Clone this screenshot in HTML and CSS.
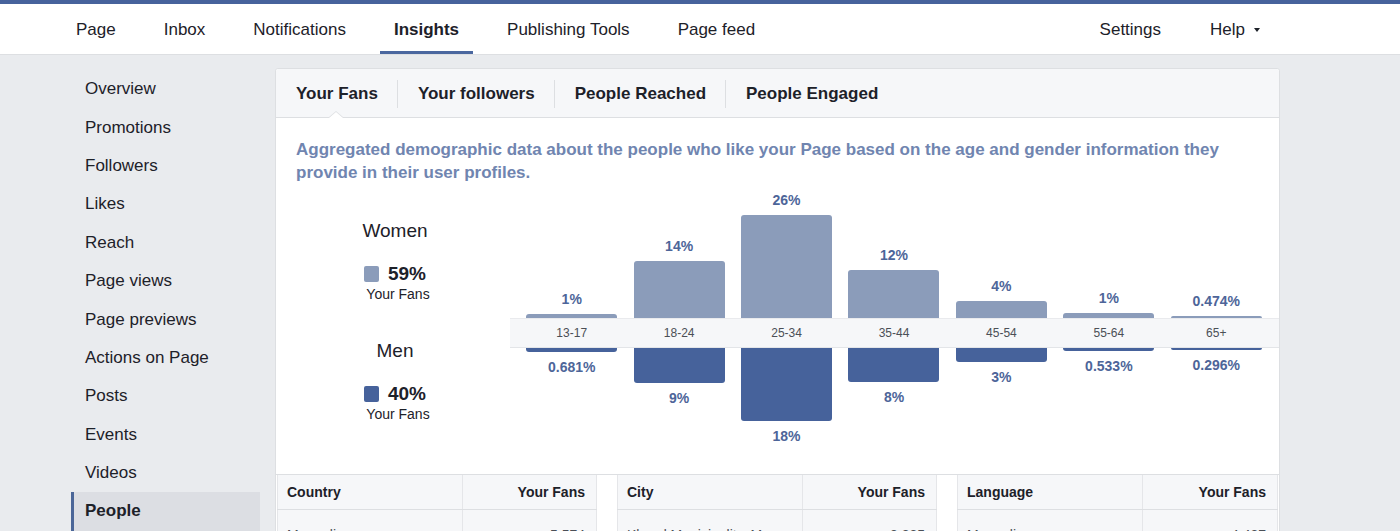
FILE: index.html
```html
<!DOCTYPE html>
<html lang="en">
<head>
<meta charset="utf-8">
<title>Insights - People</title>
<link rel="stylesheet" href="styles.css">
</head>
<body>
<div class="topbar"></div>
<nav class="nav">
  <div class="nav-left">
    <a class="nav-item">Page</a>
    <a class="nav-item">Inbox</a>
    <a class="nav-item">Notifications</a>
    <a class="nav-item active">Insights</a>
    <a class="nav-item">Publishing Tools</a>
    <a class="nav-item">Page feed</a>
  </div>
  <div class="nav-right">
    <a class="nav-item">Settings</a>
    <a class="nav-item">Help <svg class="caret-down" width="6" height="4" viewBox="0 0 6 4"><path d="M0 0h6L3 4z" fill="#1d2129"/></svg></a>
  </div>
</nav>
<div class="layout">
  <aside class="sidebar">
    <a class="side-item">Overview</a>
    <a class="side-item">Promotions</a>
    <a class="side-item">Followers</a>
    <a class="side-item">Likes</a>
    <a class="side-item">Reach</a>
    <a class="side-item">Page views</a>
    <a class="side-item">Page previews</a>
    <a class="side-item">Actions on Page</a>
    <a class="side-item">Posts</a>
    <a class="side-item">Events</a>
    <a class="side-item">Videos</a>
    <a class="side-item active">People</a>
  </aside>
  <main class="card">
    <div class="tabs">
      <div class="tab active">Your Fans</div>
      <div class="tab">Your followers</div>
      <div class="tab">People Reached</div>
      <div class="tab">People Engaged</div>
    </div>
    <p class="desc">Aggregated demographic data about the people who like your Page based on the age and gender information they provide in their user profiles.</p>
    <div class="chart">
      <div class="legend">
        <div class="lg-title">Women</div>
        <div class="lg-val"><span class="sq sq-women"></span>59%</div>
        <div class="lg-sub">Your Fans</div>
        <div class="lg-title men">Men</div>
        <div class="lg-val"><span class="sq sq-men"></span>40%</div>
        <div class="lg-sub">Your Fans</div>
      </div>
      <div class="bars">
        <div class="upper">
          <div class="col"><span class="val">1%</span><div class="bar bar-w" style="height:4px"></div></div>
          <div class="col"><span class="val">14%</span><div class="bar bar-w" style="height:57px"></div></div>
          <div class="col"><span class="val">26%</span><div class="bar bar-w" style="height:103px"></div></div>
          <div class="col"><span class="val">12%</span><div class="bar bar-w" style="height:48px"></div></div>
          <div class="col"><span class="val">4%</span><div class="bar bar-w" style="height:17px"></div></div>
          <div class="col"><span class="val">1%</span><div class="bar bar-w" style="height:5px"></div></div>
          <div class="col"><span class="val">0.474%</span><div class="bar bar-w" style="height:2px"></div></div>
        </div>
        <div class="band">
          <span class="age">13-17</span>
          <span class="age">18-24</span>
          <span class="age">25-34</span>
          <span class="age">35-44</span>
          <span class="age">45-54</span>
          <span class="age">55-64</span>
          <span class="age">65+</span>
        </div>
        <div class="lower">
          <div class="col"><div class="bar bar-m" style="height:4px"></div><span class="val">0.681%</span></div>
          <div class="col"><div class="bar bar-m" style="height:35px"></div><span class="val">9%</span></div>
          <div class="col"><div class="bar bar-m" style="height:73px"></div><span class="val">18%</span></div>
          <div class="col"><div class="bar bar-m" style="height:34px"></div><span class="val">8%</span></div>
          <div class="col"><div class="bar bar-m" style="height:14px"></div><span class="val">3%</span></div>
          <div class="col"><div class="bar bar-m" style="height:3px"></div><span class="val">0.533%</span></div>
          <div class="col"><div class="bar bar-m" style="height:2px"></div><span class="val">0.296%</span></div>
        </div>
      </div>
    </div>
    <div class="tables">
      <table class="tbl">
        <thead><tr><th class="c1">Country</th><th class="c2">Your Fans</th></tr></thead>
        <tbody><tr><td class="c1">Mongolia</td><td class="c2">5,574</td></tr></tbody>
      </table>
      <table class="tbl">
        <thead><tr><th class="c1">City</th><th class="c2">Your Fans</th></tr></thead>
        <tbody><tr><td class="c1">Khovd Municipality, M</td><td class="c2">3,885</td></tr></tbody>
      </table>
      <table class="tbl">
        <thead><tr><th class="c1">Language</th><th class="c2">Your Fans</th></tr></thead>
        <tbody><tr><td class="c1">Mongolian</td><td class="c2">4,487</td></tr></tbody>
      </table>
    </div>
  </main>
</div>
</body>
</html>
```

FILE: styles.css
```css
* { box-sizing: border-box; }
html, body { margin: 0; padding: 0; }
body {
  background: #e9ebee;
  font-family: "Liberation Sans", Arial, Helvetica, sans-serif;
  color: #1d2129;
  overflow: hidden;
  height: 531px;
}
a { color: inherit; text-decoration: none; }

.topbar { height: 4px; background: #47639c; }

.nav {
  height: 51px;
  background: #fff;
  border-bottom: 1px solid #dddfe2;
  display: flex;
  justify-content: space-between;
  padding: 0 126px 0 62px;
}
.nav-left, .nav-right { display: flex; gap: 20px; }
.nav-right { gap: 21px; }
.nav-item {
  display: flex;
  align-items: center;
  padding: 5px 14px 0 14px;
  font-size: 17px;
  color: #1d2129;
  height: 50px;
  border-bottom: 3px solid transparent;
}
.nav-item.active { font-weight: bold; border-bottom-color: #4a679f; }
.caret-down { margin-left: 9px; }

.layout { display: flex; padding-left: 71px; }
.sidebar { width: 189px; padding-top: 15px; flex: none; }
.side-item {
  display: flex;
  align-items: center;
  height: 38.4px;
  padding-left: 14px;
  font-size: 17px;
  color: #1d2129;
}
.side-item.active {
  background: #dcdee3;
  border-left: 3px solid #4b6698;
  padding-left: 11px;
  font-weight: bold;
}

.card {
  margin-left: 15px;
  margin-top: 13px;
  width: 1005px;
  background: #fff;
  border: 1px solid #dddfe2;
  border-radius: 3px 3px 0 0;
  height: 600px;
}
.tabs {
  height: 49px;
  background: #f6f7f9;
  border-bottom: 1px solid #dddfe2;
  display: flex;
  align-items: stretch;
  border-radius: 3px 3px 0 0;
}
.tab {
  position: relative;
  display: flex;
  align-items: center;
  padding: 2px 19px 0 20px;
  font-size: 17px;
  font-weight: bold;
  color: #1d2129;
}
.tab + .tab { padding-left: 21px; }
.tab + .tab::before {
  content: "";
  position: absolute;
  left: 0;
  top: 11px;
  bottom: 9px;
  border-left: 1px solid #dddfe2;
}
.tab.active::after {
  content: "";
  position: absolute;
  left: 50%;
  bottom: -1px;
  margin-left: -7px;
  width: 0;
  height: 0;
  border-left: 7px solid transparent;
  border-right: 7px solid transparent;
  border-bottom: 6px solid #fff;
  filter: drop-shadow(0 -1px 0 #dddfe2);
}

.desc {
  margin: 0;
  padding: 20px 20px 0 20px;
  font-size: 17px;
  line-height: 23px;
  font-weight: bold;
  color: #7085b0;
}

.chart { display: flex; padding-left: 20px; }
.legend {
  width: 198px;
  flex: none;
  display: flex;
  flex-direction: column;
  align-items: center;
  padding-top: 36px;
}
.lg-title { font-size: 19px; line-height: 22px; color: #1d2129; }
.lg-title.men { margin-top: 38px; }
.lg-val {
  display: flex;
  align-items: center;
  margin-top: 21px;
  font-size: 19px;
  line-height: 22px;
  font-weight: bold;
  color: #1d2129;
}
.sq { width: 15px; height: 16px; border-radius: 2px; margin-right: 9px; }
.sq-women { background: #8b9cba; }
.sq-men { background: #46629b; }
.lg-sub { font-size: 14px; line-height: 16px; margin-top: 1px; color: #1d2129; padding-left: 6px; }

.bars { margin-left: 16px; flex: 1; }
.upper, .lower, .band {
  display: grid;
  grid-template-columns: repeat(7, 1fr);
  padding: 0 9px 0 8px;
}
.upper { height: 134px; }
.lower { height: 126px; }
.col {
  display: flex;
  flex-direction: column;
  align-items: center;
}
.upper .col { justify-content: flex-end; }
.upper .val { margin-bottom: 7px; }
.lower .val { margin-top: 7px; }
.val {
  font-size: 14px;
  line-height: 16px;
  font-weight: bold;
  color: #4d6599;
}
.bar { width: 91px; }
.bar-w { background: #8b9cba; border-radius: 3px 3px 0 0; }
.bar-m { background: #46629b; border-radius: 0 0 3px 3px; }
.band {
  height: 30px;
  background: #f6f7f9;
  border-top: 1px solid #e9eaed;
  border-bottom: 1px solid #e3e5e8;
  align-items: center;
}
.age {
  text-align: center;
  font-size: 12px;
  color: #4b4f56;
}

.tables {
  display: grid;
  grid-template-columns: 320px 320px 321px;
  column-gap: 20px;
  padding: 0 1px;
  border-top: 1px solid #dddfe2;
}
.tbl {
  border-collapse: collapse;
  table-layout: fixed;
  width: 100%;
  font-size: 14px;
  border-left: 1px solid #e5e6e9;
  border-right: 1px solid #e5e6e9;
}
.tbl th {
  height: 34px;
  background: #f6f7f9;
  font-weight: bold;
  color: #1d2129;
  border-bottom: 1px solid #dddfe2;
  padding: 0 11px 0 9px;
}
.tbl .c1 { width: 185px; text-align: left; border-right: 1px solid #e5e6e9; }
.tbl .c2 { text-align: right; }
.tbl td {
  background: #f6f7f9;
  color: #4b4f56;
  padding: 17px 11px 17px 9px;
  line-height: 16px;
}
```
